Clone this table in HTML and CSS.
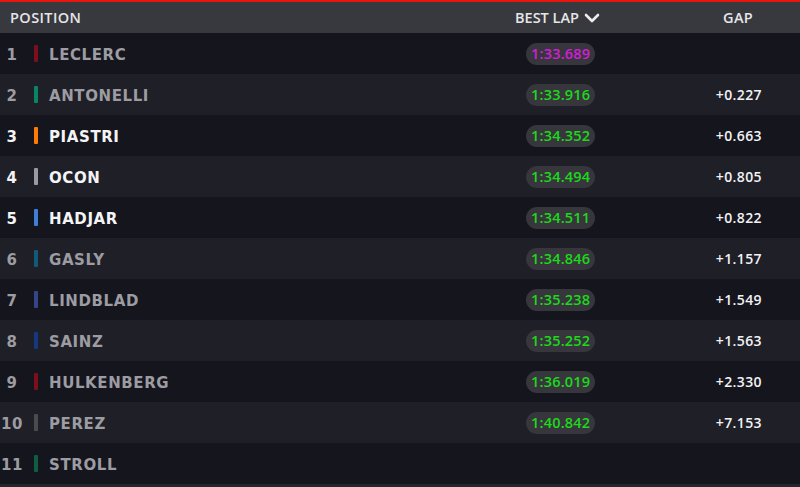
FILE: index.html
```html
<!DOCTYPE html>
<html>
<head>
<meta charset="utf-8">
<link rel="stylesheet" href="styles.css">
</head>
<body>
<div class="board">
  <div class="head">
    <div class="c-pos">POSITION</div>
    <div class="c-lap">BEST LAP <svg class="chev" width="16" height="10" viewBox="0 0 16 10"><path d="M2 2 L8 8 L14 2" fill="none" stroke="#ececee" stroke-width="2.6" stroke-linecap="round" stroke-linejoin="round"/></svg></div>
    <div class="c-gap">GAP</div>
  </div>
  <div class="row dim"><div class="num">1</div><span class="bar" style="background:#7d0f1c"></span><div class="name">LECLERC</div><div class="lap"><span class="pill purple">1:33.689</span></div><div class="gap"></div></div>
  <div class="row dim alt"><div class="num">2</div><span class="bar" style="background:#0a8366"></span><div class="name">ANTONELLI</div><div class="lap"><span class="pill">1:33.916</span></div><div class="gap">+0.227</div></div>
  <div class="row"><div class="num">3</div><span class="bar" style="background:#ff7b08"></span><div class="name">PIASTRI</div><div class="lap"><span class="pill">1:34.352</span></div><div class="gap">+0.663</div></div>
  <div class="row alt"><div class="num">4</div><span class="bar" style="background:#9a9a9f"></span><div class="name">OCON</div><div class="lap"><span class="pill">1:34.494</span></div><div class="gap">+0.805</div></div>
  <div class="row"><div class="num">5</div><span class="bar" style="background:#3e7fd8"></span><div class="name">HADJAR</div><div class="lap"><span class="pill">1:34.511</span></div><div class="gap">+0.822</div></div>
  <div class="row dim alt"><div class="num">6</div><span class="bar" style="background:#115a78"></span><div class="name">GASLY</div><div class="lap"><span class="pill">1:34.846</span></div><div class="gap">+1.157</div></div>
  <div class="row dim"><div class="num">7</div><span class="bar" style="background:#34468a"></span><div class="name">LINDBLAD</div><div class="lap"><span class="pill">1:35.238</span></div><div class="gap">+1.549</div></div>
  <div class="row dim alt"><div class="num">8</div><span class="bar" style="background:#15387e"></span><div class="name">SAINZ</div><div class="lap"><span class="pill">1:35.252</span></div><div class="gap">+1.563</div></div>
  <div class="row dim"><div class="num">9</div><span class="bar" style="background:#7d0f1c"></span><div class="name">HULKENBERG</div><div class="lap"><span class="pill">1:36.019</span></div><div class="gap">+2.330</div></div>
  <div class="row dim alt"><div class="num">10</div><span class="bar" style="background:#4a4a4f"></span><div class="name">PEREZ</div><div class="lap"><span class="pill">1:40.842</span></div><div class="gap">+7.153</div></div>
  <div class="row dim"><div class="num">11</div><span class="bar" style="background:#0d5e43"></span><div class="name">STROLL</div><div class="lap"></div><div class="gap"></div></div>
  <div class="foot"></div>
</div>
</body>
</html>
```
FILE: styles.css
```css
* { box-sizing: border-box; }
html, body { margin: 0; padding: 0; background: #15151d; }
body { font-family: "Open Sans", "Liberation Sans", sans-serif; width: 800px; height: 487px; overflow: hidden; }
.board { display: flex; flex-direction: column; border-top: 2px solid #e8160c; }
.head {
  height: 31px; background: #38393e; color: #e6e6e8;
  display: grid; grid-template-columns: 515px 1fr 120px; align-items: center;
  font-size: 14.5px; font-weight: 600;
}
.c-pos { padding-left: 10px; letter-spacing: 0.4px; }
.c-lap { display: flex; align-items: center; gap: 5px; letter-spacing: 0px; }
.c-gap { text-align: right; padding-right: 47px; letter-spacing: 0.3px; }
.chev { display: block; }
.row {
  height: 41px; background: #15151d;
  display: grid; grid-template-columns: 34px 4px 488px 80px 1fr 38px; align-items: center;
  color: #f4f4f6; font-weight: 700;
}
.row.alt { background: #1f1f27; }
.row.dim { color: #9c9ca2; }
.num { font-family: "DejaVu Sans", sans-serif; font-size: 15px; width: 24px; text-align: center; letter-spacing: 0.6px; padding-top: 2px; }
.bar { width: 4px; height: 17px; border-radius: 1px; }
.name { font-family: "DejaVu Sans", sans-serif; font-size: 15px; padding-left: 11px; letter-spacing: 0.6px; padding-top: 2px; }
.lap { justify-self: start; }
.pill {
  display: inline-block; background: #36363c; color: #1cd91a; border-radius: 11px;
  height: 22px; line-height: 22px; padding: 0 5px; font-size: 14.5px; font-weight: 600; letter-spacing: 0.2px;
}
.pill.purple { color: #d21ed6; }
.gap { grid-column: 5; justify-self: end; font-size: 14px; font-weight: 600; color: #f2f2f4; letter-spacing: 0.4px; }
.foot { height: 3px; background: #25252d; }
```
